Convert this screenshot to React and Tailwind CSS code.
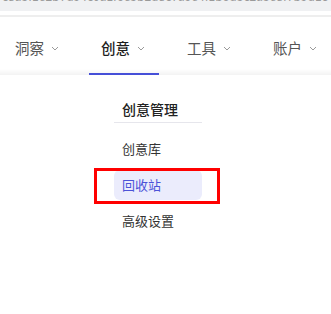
import React from 'react'

const NAV = [
  { label: '洞察' },
  { label: '创意', active: true },
  { label: '工具' },
  { label: '账户' },
]

const ITEMS = [
  { label: '创意库' },
  { label: '回收站', active: true },
  { label: '高级设置' },
]

function Chevron() {
  return (
    <svg width="8" height="5" viewBox="0 0 8 5" fill="none" className="ml-[7px] mt-[1px]">
      <path d="M1 1l3 3 3-3" stroke="#9a9a9a" strokeWidth="1" />
    </svg>
  )
}

export default function App() {
  return (
    <div
      className="relative w-[331px] h-[314px] overflow-hidden bg-white"
      style={{ fontFamily: '"Noto Sans CJK SC", "Noto Sans", sans-serif' }}
    >
      {/* ── cut-off address strip ── */}
      <div className="h-[11px] bg-[#f0f1f3] overflow-hidden">
        <div className="-mt-[11px] pl-[2px] text-[12px] leading-[14px] text-[#9a9a9a] whitespace-nowrap">
          c8a3f1e2b7d94c0a1f6e3b2d8c7a9e4f1b6d3c2a5e8f7b9d1c4a6 · /creative/recycle
        </div>
      </div>
      <div className="h-[6px] border-b-2 border-[#eeeeee]" />

      {/* ── Top nav ── */}
      <div className="flex h-[58px] gap-4 pl-[3px] bg-[linear-gradient(#ffffff_52px,#f3f3f3)]">
        {NAV.map(n => (
          <div
            key={n.label}
            className={
              'flex w-[72px] items-center pl-3 pt-[6px] border-b-2 ' +
              (n.active ? 'border-[#4650d8]' : 'border-transparent')
            }
          >
            <span
              className={
                'text-[14.5px] leading-[20px] ' +
                (n.active ? 'text-[#1f1f1f] font-medium' : 'text-[#555]')
              }
            >
              {n.label}
            </span>
            <Chevron />
          </div>
        ))}
      </div>

      {/* ── Dropdown ── */}
      <div className="ml-[114px] mt-[24px] w-[88px]">
        <div className="h-[24px] border-b border-[#e6e6ec] pl-2 text-[14px] leading-[20px] font-medium text-[#222]">
          创意管理
        </div>
        <div className="flex flex-col gap-[6px] pt-[11px]">
          {ITEMS.map(it => (
            <div
              key={it.label}
              className={
                'flex h-[30px] items-center rounded-[6px] pl-2 text-[13px] ' +
                (it.active ? 'bg-[#ebecfc] text-[#4c53d8]' : 'text-[#333]')
              }
            >
              {it.label}
            </div>
          ))}
        </div>
      </div>

      {/* annotation box */}
      <div className="absolute left-[94px] top-[168px] w-[126px] h-[36px] border-[3px] border-[#ff0000]" />
    </div>
  )
}
